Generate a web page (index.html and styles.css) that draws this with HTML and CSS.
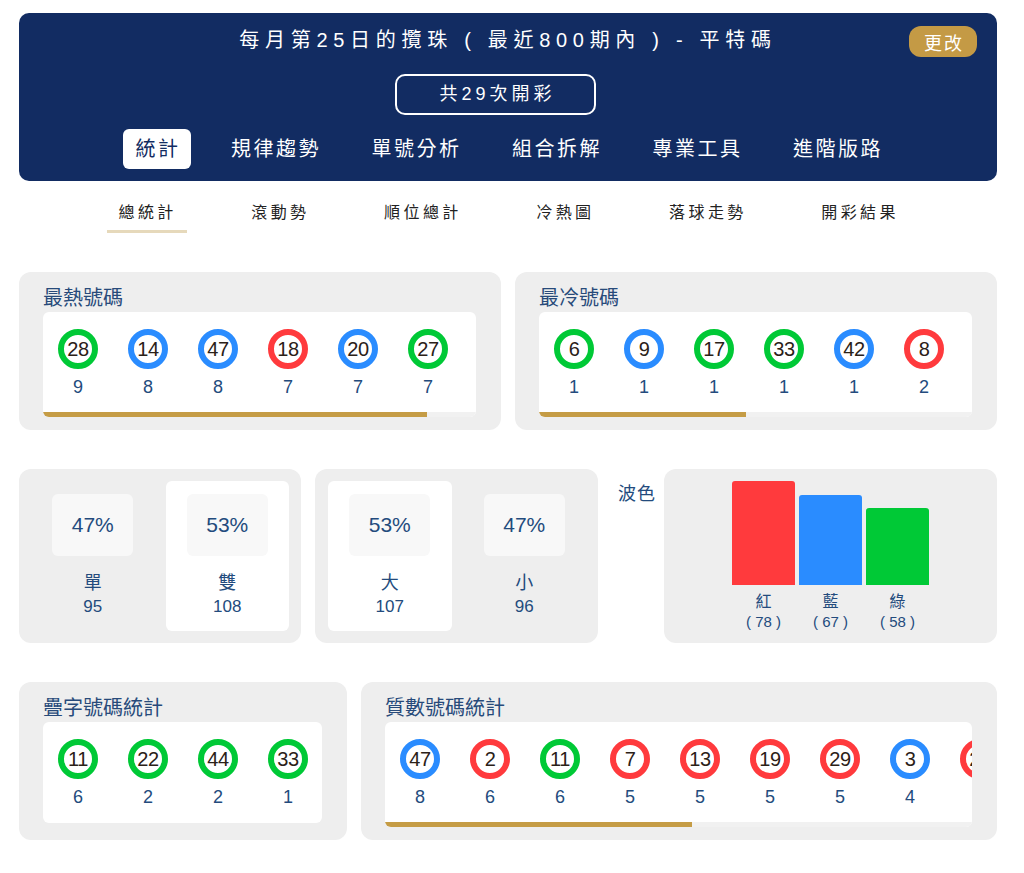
FILE: index.html
```html
<!DOCTYPE html>
<html lang="zh-Hant">
<head>
  <meta charset="UTF-8">
  <meta name="viewport" content="width=device-width, initial-scale=1">
  <title>每月第25日的攪珠 - 平特碼</title>
  <link rel="stylesheet" href="styles.css">
</head>
<body>

<div class="page">

  <div class="header">
    <h1 class="title">每月第25日的攬珠 ( 最近800期內 ) - 平特碼</h1>
    <button class="edit">更改</button>
    <div class="total">共29次開彩</div>
    <div class="tabs">
      <div class="tab active">統計</div>
      <div class="tab">規律趨勢</div>
      <div class="tab">單號分析</div>
      <div class="tab">組合拆解</div>
      <div class="tab">專業工具</div>
      <div class="tab">進階版路</div>
    </div>
  </div>

  <div class="subtabs">
    <div class="subtab active">總統計</div>
    <div class="subtab">滾動勢</div>
    <div class="subtab">順位總計</div>
    <div class="subtab">冷熱圖</div>
    <div class="subtab">落球走勢</div>
    <div class="subtab">開彩結果</div>
  </div>

  <!-- hot / cold -->
  <div class="row">
    <div class="card">
      <div class="card-title">最熱號碼</div>
      <div class="panel">
        <div class="balls">
          <div class="item"><div class="ball g">28</div><div class="cnt">9</div></div>
          <div class="item"><div class="ball b">14</div><div class="cnt">8</div></div>
          <div class="item"><div class="ball b">47</div><div class="cnt">8</div></div>
          <div class="item"><div class="ball r">18</div><div class="cnt">7</div></div>
          <div class="item"><div class="ball b">20</div><div class="cnt">7</div></div>
          <div class="item"><div class="ball g">27</div><div class="cnt">7</div></div>
        </div>
        <div class="scroll"><div class="thumb" style="width: 384px"></div></div>
      </div>
    </div>
    <div class="card">
      <div class="card-title">最冷號碼</div>
      <div class="panel">
        <div class="balls">
          <div class="item"><div class="ball g">6</div><div class="cnt">1</div></div>
          <div class="item"><div class="ball b">9</div><div class="cnt">1</div></div>
          <div class="item"><div class="ball g">17</div><div class="cnt">1</div></div>
          <div class="item"><div class="ball g">33</div><div class="cnt">1</div></div>
          <div class="item"><div class="ball b">42</div><div class="cnt">1</div></div>
          <div class="item"><div class="ball r">8</div><div class="cnt">2</div></div>
        </div>
        <div class="scroll"><div class="thumb" style="width: 207px"></div></div>
      </div>
    </div>
  </div>

  <!-- odd/even, big/small, colours -->
  <div class="row">
    <div class="card split odd-even">
      <div class="half">
        <div class="pct">47%</div>
        <div class="lbl">單</div>
        <div class="num">95</div>
      </div>
      <div class="half active">
        <div class="pct">53%</div>
        <div class="lbl">雙</div>
        <div class="num">108</div>
      </div>
    </div>
    <div class="card split big-small">
      <div class="half active">
        <div class="pct">53%</div>
        <div class="lbl">大</div>
        <div class="num">107</div>
      </div>
      <div class="half">
        <div class="pct">47%</div>
        <div class="lbl">小</div>
        <div class="num">96</div>
      </div>
    </div>
    <div class="wave-title">波色</div>
    <div class="card wave">
      <div class="bars">
        <div class="bar-col">
          <div class="bar r" style="height: 104px"></div>
          <div class="bar-lbl">紅</div>
          <div class="bar-num">( 78 )</div>
        </div>
        <div class="bar-col">
          <div class="bar b" style="height: 90px"></div>
          <div class="bar-lbl">藍</div>
          <div class="bar-num">( 67 )</div>
        </div>
        <div class="bar-col">
          <div class="bar g" style="height: 77px"></div>
          <div class="bar-lbl">綠</div>
          <div class="bar-num">( 58 )</div>
        </div>
      </div>
    </div>
  </div>

  <!-- repeated digits / primes -->
  <div class="row">
    <div class="card twins">
      <div class="card-title">疊字號碼統計</div>
      <div class="panel">
        <div class="balls">
          <div class="item"><div class="ball g">11</div><div class="cnt">6</div></div>
          <div class="item"><div class="ball g">22</div><div class="cnt">2</div></div>
          <div class="item"><div class="ball g">44</div><div class="cnt">2</div></div>
          <div class="item"><div class="ball g">33</div><div class="cnt">1</div></div>
        </div>
      </div>
    </div>
    <div class="card">
      <div class="card-title">質數號碼統計</div>
      <div class="panel">
        <div class="balls">
          <div class="item"><div class="ball b">47</div><div class="cnt">8</div></div>
          <div class="item"><div class="ball r">2</div><div class="cnt">6</div></div>
          <div class="item"><div class="ball g">11</div><div class="cnt">6</div></div>
          <div class="item"><div class="ball r">7</div><div class="cnt">5</div></div>
          <div class="item"><div class="ball r">13</div><div class="cnt">5</div></div>
          <div class="item"><div class="ball r">19</div><div class="cnt">5</div></div>
          <div class="item"><div class="ball r">29</div><div class="cnt">5</div></div>
          <div class="item"><div class="ball b">3</div><div class="cnt">4</div></div>
          <div class="item"><div class="ball r">23</div><div class="cnt">4</div></div>
        </div>
        <div class="scroll"><div class="thumb" style="width: 307px"></div></div>
      </div>
    </div>
  </div>

</div>

</body>
</html>
```

FILE: styles.css
```css
* { margin: 0; padding: 0; box-sizing: border-box; font-family: "Liberation Sans", "Noto Sans CJK TC", sans-serif; }
body { background: #fff; }

.page { padding: 13px 27px 40px 19px; }

/* Header */
.header { position: relative; background: #122c62; border-radius: 10px; padding: 13px 0 12px; display: flex; flex-direction: column; align-items: center; color: #fff; }
.header .title { font-size: 20px; line-height: 28px; font-weight: normal; letter-spacing: 5.7px; }
.header .edit { position: absolute; top: 13px; right: 20px; width: 68px; height: 31px; border: none; border-radius: 12px; background: #c49a45; color: #fff; font-size: 18px; letter-spacing: 2px; padding-left: 2px; cursor: pointer; }
.header .total { margin: 20px 25px 0 0; width: 201px; height: 41px; border: 2px solid #fff; border-radius: 10px; font-size: 18px; line-height: 37px; letter-spacing: 4px; padding-left: 4px; text-align: center; }
.tabs { margin-top: 14px; display: flex; gap: 27px; }
.tab { height: 40px; line-height: 40px; padding: 0 10.5px 0 13px; font-size: 20px; letter-spacing: 2.5px; border-radius: 6px; cursor: pointer; }
.tab.active { background: #fff; color: #122c62; }

/* Sub tabs */
.subtabs { margin-top: 20px; display: flex; justify-content: center; gap: 52px; }
.subtab { padding: 0 10.6px 5px 12px; font-size: 16px; line-height: 24px; letter-spacing: 3.4px; color: #222; border-bottom: 3px solid transparent; }
.subtab.active { border-bottom-color: #e6d9bb; }

/* Cards */
.row { margin-top: 39px; display: flex; gap: 14px; }
.card { flex: 1; min-width: 0; background: #eee; border-radius: 12px; padding: 13px 25px 13px 24px; }
.card-title { font-size: 20px; line-height: 26px; color: #274a7a; margin-bottom: 1px; }
.panel { background: #fff; border-radius: 6px; overflow: hidden; }
.balls { display: flex; padding: 17px 0 15px; }
.item { flex: 0 0 70px; display: flex; flex-direction: column; align-items: center; }
.ball { width: 40px; height: 40px; border: 6px solid; border-radius: 50%; background: #fff; font-size: 20px; line-height: 28px; text-align: center; color: #2b2118; letter-spacing: -0.4px; }
.ball.g { border-color: #00c936; }
.ball.b { border-color: #2a8cff; }
.ball.r { border-color: #ff3a3d; }
.cnt { margin-top: 7px; font-size: 18px; line-height: 22px; color: #234b7d; }
.scroll { height: 5px; margin-top: -1px; background: #f1f1f1; }
.scroll .thumb { height: 5px; background: #c59c45; }

.twins { flex: 0 0 328px; }

/* Split stats */
.split { flex: 0 0 282px; padding: 12px; display: flex; gap: 11px; }
.split.big-small { flex-basis: 283px; padding-left: 13px; }
.half { flex: 1; border-radius: 6px; padding: 13px 0 14px; display: flex; flex-direction: column; align-items: center; color: #234b7d; }
.half.active { background: #fff; }
.half .pct { width: 81px; height: 62px; background: #f8f8f8; border-radius: 6px; font-size: 21px; line-height: 62px; text-align: center; }
.half .lbl { margin-top: 16px; font-size: 18px; line-height: 22px; }
.half .num { margin-top: 3px; font-size: 17px; line-height: 20px; }

/* Colour bars */
.wave-title { margin: 12px -6px 0 6px; font-size: 18px; line-height: 26px; letter-spacing: 1px; color: #234b7d; }
.wave { padding: 12px 12px 11px; display: flex; justify-content: center; align-items: flex-end; }
.bars { display: flex; gap: 4px; align-items: flex-end; }
.bar-col { width: 63px; display: flex; flex-direction: column; align-items: center; color: #234b7d; }
.bar { width: 63px; border-radius: 3px 3px 0 0; }
.bar.r { background: #ff3a3d; }
.bar.b { background: #2a8cff; }
.bar.g { background: #00c936; }
.bar-lbl { margin-top: 7px; font-size: 16px; line-height: 20px; }
.bar-num { font-size: 15px; line-height: 20px; }
```
